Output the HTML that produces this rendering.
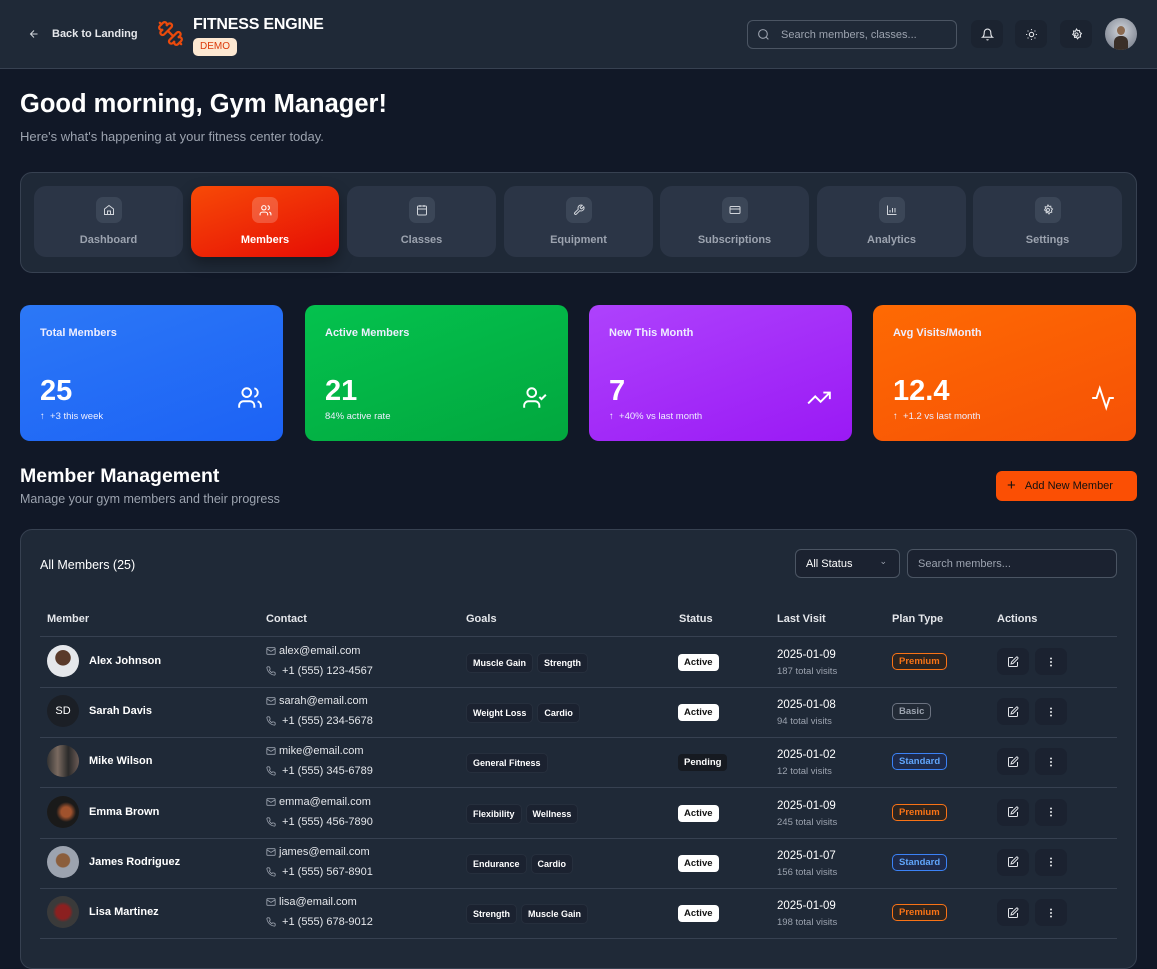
<!DOCTYPE html>
<html><head><meta charset="utf-8"><style>
*{box-sizing:border-box;margin:0;padding:0}
body{width:1157px;height:939px;overflow:hidden;background:#111827;font-family:"Liberation Sans",sans-serif;color:#fff;position:relative}
.a{position:absolute}
svg{display:block}
.hdr{left:0;top:0;width:1157px;height:69px;background:#1f2937;border-bottom:1px solid #374151}
.ib{width:32px;height:28px;border-radius:7px;background:#1b2330;display:flex;align-items:center;justify-content:center}
.tabs{left:20px;top:172px;width:1117px;height:101px;background:#1f2937;border:1px solid #374151;border-radius:12px}
.tab{top:186px;height:71px;width:149px;background:#2b3546;border-radius:12px;text-align:center}
.tab .ic{width:26px;height:26px;border-radius:7px;background:#3b4657;margin:11px auto 0;display:flex;align-items:center;justify-content:center}
.tab .t{font-size:11px;font-weight:bold;color:#9ca3af;margin-top:11px}
.card{top:305px;width:263px;height:136px;border-radius:10px}
.card .l{position:absolute;left:20px;top:22px;font-size:11px;font-weight:bold;color:#eef}
.card .n{position:absolute;left:20px;top:70px;font-size:29px;font-weight:900}
.card .s{position:absolute;left:20px;top:106px;font-size:9.5px;color:#eef}
.card .ci{position:absolute;right:20px;top:80px}
.panel{left:20px;top:529px;width:1117px;height:440px;background:#1f2937;border:1px solid #374151;border-radius:12px}
.th{top:613px;font-size:11px;font-weight:bold;color:#e5e7eb}
.line{left:40px;width:1077px;height:1px;background:#374151}
.nm{font-size:11px;font-weight:bold}
.av{width:32px;height:32px;border-radius:50%;overflow:hidden}
.ct{font-size:11px;color:#e5e7eb;display:flex;align-items:center;gap:3px}
.tags{display:flex;gap:4px}
.tag{font-size:9px;font-weight:bold;background:#1b2230;border:1px solid #262f3d;border-radius:5px;padding:4px 6px}
.st{font-size:9.5px;font-weight:bold;border-radius:4px;padding:3px 6px}
.pl{font-size:9.5px;font-weight:bold;border-radius:5px;padding:2px 6px;border:1px solid}
.ab{width:32px;height:27px;border-radius:7px;background:#1b2230;display:flex;align-items:center;justify-content:center}
</style></head><body>
<div class="a hdr"></div>
<svg class="a" style="left:28px;top:28px" width="12" height="12" viewBox="0 0 24 24" fill="none" stroke="#d1d5db" stroke-width="2"><path d="M19 12H5M12 19l-7-7 7-7"/></svg>
<div class="a" style="left:52px;top:28px;font-size:11px;color:#e5e7eb;font-weight:bold">Back to Landing</div>
<svg class="a" style="left:157px;top:20px" width="27" height="27" viewBox="0 0 24 24" fill="none" stroke="#ea4a0c" stroke-width="2" stroke-linecap="round"><path d="M14.4 14.4 9.6 9.6M18.66 21.51a2 2 0 1 1-2.83-2.83l-1.77 1.77a2 2 0 1 1-2.83-2.83l6.36-6.36a2 2 0 1 1 2.83 2.83l-1.77 1.77a2 2 0 1 1 2.83 2.83zM21.5 21.5l-1.4-1.4M3.9 3.9 2.5 2.5M6.4 12.77a2 2 0 1 1-2.83-2.83l1.77-1.77a2 2 0 1 1-2.83-2.83l2.83-2.83a2 2 0 1 1 2.83 2.83l1.77-1.77a2 2 0 1 1 2.83 2.83z"/></svg>
<div class="a" style="left:193px;top:16px;font-size:16px;font-weight:900;letter-spacing:-.2px">FITNESS ENGINE</div>
<div class="a" style="left:193px;top:38px;width:44px;height:18px;border-radius:5px;background:#fde8d2;color:#dc3a0b;font-size:10px;text-align:center;line-height:18px">DEMO</div>
<div class="a" style="left:747px;top:20px;width:210px;height:29px;border:1px solid #4b5563;border-radius:6px;background:#1f2937"></div>
<svg class="a" style="left:757px;top:28px" width="13" height="13" viewBox="0 0 24 24" fill="none" stroke="#9ca3af" stroke-width="2"><circle cx="11" cy="11" r="8"/><path d="m21 21-4.3-4.3"/></svg>
<div class="a" style="left:781px;top:29px;font-size:11px;color:#9ca3af">Search members, classes...</div>
<div class="a ib" style="left:971px;top:20px"><svg width="13" height="13" viewBox="0 0 24 24" fill="none" stroke="#e5e7eb" stroke-width="2"><path d="M6 8a6 6 0 0 1 12 0c0 7 3 9 3 9H3s3-2 3-9M10.3 21a1.94 1.94 0 0 0 3.4 0"/></svg></div>
<div class="a ib" style="left:1015px;top:20px"><svg width="13" height="13" viewBox="0 0 24 24" fill="none" stroke="#e5e7eb" stroke-width="2"><circle cx="12" cy="12" r="4"/><path d="M12 2v2M12 20v2M4.9 4.9l1.4 1.4M17.7 17.7l1.4 1.4M2 12h2M20 12h2M6.3 17.7l-1.4 1.4M19.1 4.9l-1.4 1.4"/></svg></div>
<div class="a ib" style="left:1060px;top:20px"><svg width="13" height="13" viewBox="0 0 24 24" fill="none" stroke="#e5e7eb" stroke-width="2"><circle cx="12" cy="12" r="3"/><path d="M12 2l2 3 3.5-.5.5 3.5 3 2-2 3 .5 3.5-3.5.5-2 3-2-3-3.5.5-.5-3.5-3-2 2-3-.5-3.5 3.5.5z"/></svg></div>
<div class="a" style="left:1105px;top:18px;width:32px;height:32px;border-radius:50%;background:radial-gradient(circle at 50% 40%,#d1d5db,#6b7280);overflow:hidden"><div style="margin:8px auto 0;width:8px;height:9px;border-radius:50%;background:#8b6a50"></div><div style="margin:1px auto 0;width:14px;height:14px;border-radius:6px 6px 0 0;background:#3a2f28"></div></div>

<div class="a" style="left:20px;top:90px;font-size:25.5px;font-weight:900">Good morning, Gym Manager!</div>
<div class="a" style="left:20px;top:129px;font-size:13px;color:#9ca3af">Here's what's happening at your fitness center today.</div>

<div class="a tabs"></div>
<div class="a tab" style="left:34px"><div class="ic"><svg width="12" height="12" viewBox="0 0 24 24" fill="none" stroke="#d1d5db" stroke-width="2"><path d="M3 10l9-7 9 7v11H3z M9 21v-7h6v7"/></svg></div><div class="t">Dashboard</div></div>
<div class="a tab" style="left:191px;width:148px;background:linear-gradient(160deg,#f74a06,#e60c05);box-shadow:0 6px 14px rgba(0,0,0,.35)"><div class="ic" style="background:rgba(255,255,255,.2)"><svg width="13" height="13" viewBox="0 0 24 24" fill="none" stroke="#fff" stroke-width="2"><circle cx="9" cy="7" r="4"/><path d="M2 21v-2a4 4 0 0 1 4-4h6a4 4 0 0 1 4 4v2M16 3.1a4 4 0 0 1 0 7.8M22 21v-2a4 4 0 0 0-3-3.9"/></svg></div><div class="t" style="color:#fff">Members</div></div>
<div class="a tab" style="left:347px"><div class="ic"><svg width="12" height="12" viewBox="0 0 24 24" fill="none" stroke="#d1d5db" stroke-width="2"><rect x="3" y="4" width="18" height="18" rx="2"/><path d="M16 2v4M8 2v4M3 10h18"/></svg></div><div class="t">Classes</div></div>
<div class="a tab" style="left:504px"><div class="ic"><svg width="12" height="12" viewBox="0 0 24 24" fill="none" stroke="#d1d5db" stroke-width="2"><path d="M14.7 6.3a1 1 0 0 0 0 1.4l1.6 1.6a1 1 0 0 0 1.4 0l3.8-3.8a6 6 0 0 1-7.9 7.9l-6.9 6.9a2.1 2.1 0 0 1-3-3l6.9-6.9a6 6 0 0 1 7.9-7.9z"/></svg></div><div class="t">Equipment</div></div>
<div class="a tab" style="left:660px"><div class="ic"><svg width="12" height="12" viewBox="0 0 24 24" fill="none" stroke="#d1d5db" stroke-width="2"><rect x="2" y="5" width="20" height="14" rx="2"/><path d="M2 10h20"/></svg></div><div class="t">Subscriptions</div></div>
<div class="a tab" style="left:817px"><div class="ic"><svg width="12" height="12" viewBox="0 0 24 24" fill="none" stroke="#d1d5db" stroke-width="2"><path d="M3 3v18h18M8 17v-5M13 17V8M18 17v-9"/></svg></div><div class="t">Analytics</div></div>
<div class="a tab" style="left:973px"><div class="ic"><svg width="12" height="12" viewBox="0 0 24 24" fill="none" stroke="#d1d5db" stroke-width="2"><circle cx="12" cy="12" r="3"/><path d="M12 2l2 3 3.5-.5.5 3.5 3 2-2 3 .5 3.5-3.5.5-2 3-2-3-3.5.5-.5-3.5-3-2 2-3-.5-3.5 3.5.5z"/></svg></div><div class="t">Settings</div></div>

<div class="a card" style="left:20px;background:linear-gradient(160deg,#2c78f6,#1c62f5)"><div class="l">Total Members</div><div class="n">25</div><div class="s">↑ &nbsp;+3 this week</div><svg class="ci" width="26" height="26" viewBox="0 0 24 24" fill="none" stroke="#fff" stroke-width="1.8"><circle cx="9" cy="7" r="4"/><path d="M2 21v-2a4 4 0 0 1 4-4h6a4 4 0 0 1 4 4v2M16 3.1a4 4 0 0 1 0 7.8M22 21v-2a4 4 0 0 0-3-3.9"/></svg></div>
<div class="a card" style="left:305px;background:linear-gradient(160deg,#04c24e,#02a73e)"><div class="l">Active Members</div><div class="n">21</div><div class="s">84% active rate</div><svg class="ci" width="26" height="26" viewBox="0 0 24 24" fill="none" stroke="#fff" stroke-width="1.8"><circle cx="9" cy="7" r="4"/><path d="M2 21v-2a4 4 0 0 1 4-4h6a4 4 0 0 1 4 4v2M16 11l2 2 4-4"/></svg></div>
<div class="a card" style="left:589px;background:linear-gradient(160deg,#ae42fc,#9a19f5)"><div class="l">New This Month</div><div class="n">7</div><div class="s">↑ &nbsp;+40% vs last month</div><svg class="ci" width="26" height="26" viewBox="0 0 24 24" fill="none" stroke="#fff" stroke-width="1.8"><path d="M22 7l-8.5 8.5-5-5L2 17M16 7h6v6"/></svg></div>
<div class="a card" style="left:873px;background:linear-gradient(160deg,#fe6a03,#f65106)"><div class="l">Avg Visits/Month</div><div class="n">12.4</div><div class="s">↑ &nbsp;+1.2 vs last month</div><svg class="ci" width="26" height="26" viewBox="0 0 24 24" fill="none" stroke="#fff" stroke-width="1.8"><path d="M22 12h-4l-3 9L9 3l-3 9H2"/></svg></div>

<div class="a" style="left:20px;top:465px;font-size:19.5px;font-weight:bold">Member Management</div>
<div class="a" style="left:20px;top:492px;font-size:12.5px;color:#9ca3af">Manage your gym members and their progress</div>
<div class="a" style="left:996px;top:471px;width:141px;height:30px;border-radius:6px;background:#fb4f04;font-size:11px;color:#111;line-height:30px;padding-left:11px"><span style="font-size:15px;vertical-align:-1px">+</span>&nbsp;&nbsp;&nbsp;Add New Member</div>

<div class="a panel"></div>
<div class="a" style="left:40px;top:558px;font-size:12.5px">All Members (25)</div>
<div class="a" style="left:795px;top:549px;width:105px;height:29px;border:1px solid #4b5563;border-radius:6px;background:#1b2230;font-size:11px;padding:8px 10px">All Status<span style="position:absolute;right:12px;top:6px;color:#9ca3af;font-size:9px">⌄</span></div>
<div class="a" style="left:907px;top:549px;width:210px;height:29px;border:1px solid #4b5563;border-radius:6px;background:#1b2230;font-size:11px;padding:8px 10px;color:#9ca3af">Search members...</div>

<div class="a th" style="left:47px">Member</div>
<div class="a th" style="left:266px">Contact</div>
<div class="a th" style="left:466px">Goals</div>
<div class="a th" style="left:679px">Status</div>
<div class="a th" style="left:777px">Last Visit</div>
<div class="a th" style="left:892px">Plan Type</div>
<div class="a th" style="left:997px">Actions</div>
<div class="a line" style="top:636px"></div>

<div id="rows"></div>
<script>
var R=[
["Alex Johnson","alex","123-4567",["Muscle Gain","Strength"],"Active","2025-01-09","187","Premium","radial-gradient(circle at 50% 40%,#5a3a2a 30%,#e5e7eb 32%)"],
["Sarah Davis","sarah","234-5678",["Weight Loss","Cardio"],"Active","2025-01-08","94","Basic","SD"],
["Mike Wilson","mike","345-6789",["General Fitness"],"Pending","2025-01-02","12","Standard","linear-gradient(90deg,#333,#7a6a60,#2a2a2a,#6b5b55)"],
["Emma Brown","emma","456-7890",["Flexibility","Wellness"],"Active","2025-01-09","245","Premium","radial-gradient(circle at 60% 50%,#a0522d 20%,#1a1a1a 40%)"],
["James Rodriguez","james","567-8901",["Endurance","Cardio"],"Active","2025-01-07","156","Standard","radial-gradient(circle at 50% 45%,#8b5e3c 28%,#9ca3af 32%)"],
["Lisa Martinez","lisa","678-9012",["Strength","Muscle Gain"],"Active","2025-01-09","198","Premium","radial-gradient(circle at 50% 50%,#8b2020 30%,#3a3a3a 45%)"]];
var P={Premium:"color:#f97316;border-color:#f97316;background:#2b2420",Basic:"color:#9ca3af;border-color:#6b7280;background:#222a36",Standard:"color:#60a5fa;border-color:#3b82f6;background:#1e2a4a"};
var h="";
R.forEach(function(r,i){var y=637+i*50.2;
var av=r[8]=="SD"?'<div class="a av" style="left:47px;top:'+(y+8)+'px;background:#1b1f26;font-size:11px;text-align:center;line-height:32px">SD</div>':'<div class="a av" style="left:47px;top:'+(y+8)+'px;background:'+r[8]+'"></div>';
h+=av+'<div class="a nm" style="left:89px;top:'+(y+18)+'px">'+r[0]+'</div>';
h+='<div class="a ct" style="left:266px;top:'+(y+8)+'px"><svg width="10" height="10" viewBox="0 0 24 24" fill="none" stroke="#9ca3af" stroke-width="2"><rect x="2" y="4" width="20" height="16" rx="2"/><path d="m22 7-10 6L2 7"/></svg>'+r[1]+'@email.com</div>';
h+='<div class="a ct" style="left:266px;top:'+(y+28)+'px"><svg width="10" height="10" viewBox="0 0 24 24" fill="none" stroke="#9ca3af" stroke-width="2"><path d="M22 16.9v3a2 2 0 0 1-2.2 2 19.8 19.8 0 0 1-8.6-3.1 19.5 19.5 0 0 1-6-6A19.8 19.8 0 0 1 2.1 4.2 2 2 0 0 1 4.1 2h3a2 2 0 0 1 2 1.7c.1.9.4 1.8.7 2.7a2 2 0 0 1-.5 2.1L8 9.8a16 16 0 0 0 6 6l1.3-1.3a2 2 0 0 1 2.1-.4c.9.3 1.8.6 2.7.7a2 2 0 0 1 1.7 2z"/></svg>&nbsp;+1 (555) '+r[2]+'</div>';
h+='<div class="a tags" style="left:466px;top:'+(y+16)+'px">';r[3].forEach(function(g){h+='<div class="tag">'+g+'</div>';});h+='</div>';
h+= r[4]=="Active"?'<div class="a st" style="left:678px;top:'+(y+17)+'px;background:#fff;color:#111">Active</div>':'<div class="a st" style="left:678px;top:'+(y+17)+'px;background:#161a21;color:#fff">Pending</div>';
h+='<div class="a" style="left:777px;top:'+(y+12)+'px;font-size:11.5px">'+r[5]+'</div><div class="a" style="left:777px;top:'+(y+29)+'px;font-size:9.5px;color:#9ca3af">'+r[6]+' total visits</div>';
h+='<div class="a pl" style="left:892px;top:'+(y+16)+'px;'+P[r[7]]+'">'+r[7]+'</div>';
h+='<div class="a ab" style="left:997px;top:'+(y+11)+'px"><svg width="12" height="12" viewBox="0 0 24 24" fill="none" stroke="#e5e7eb" stroke-width="2"><path d="M12 3H5a2 2 0 0 0-2 2v14a2 2 0 0 0 2 2h14a2 2 0 0 0 2-2v-7"/><path d="M18.4 2.6a2.1 2.1 0 0 1 3 3L12 15l-4 1 1-4z"/></svg></div>';
h+='<div class="a ab" style="left:1035px;top:'+(y+11)+'px"><svg width="12" height="12" viewBox="0 0 24 24" fill="#e5e7eb"><circle cx="12" cy="5" r="2"/><circle cx="12" cy="12" r="2"/><circle cx="12" cy="19" r="2"/></svg></div>';
h+='<div class="a line" style="top:'+(y+50)+'px"></div>';
});
document.getElementById("rows").innerHTML=h;
</script>
</body></html>
